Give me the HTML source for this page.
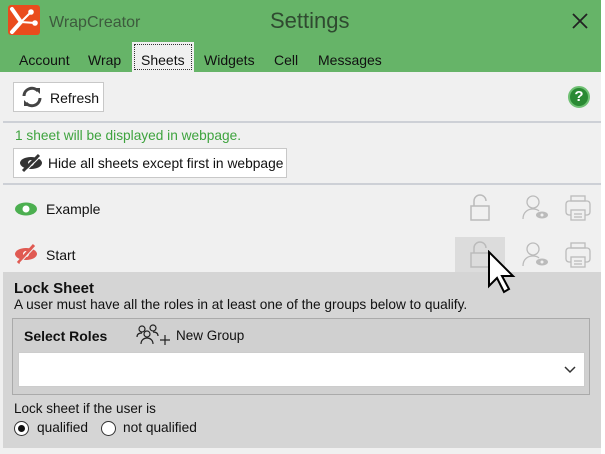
<!DOCTYPE html><html><head><style>
*{margin:0;padding:0;box-sizing:border-box}
body{width:605px;height:454px;background:#fff;font-family:"Liberation Sans",sans-serif;font-size:13px;color:#111;position:relative;overflow:hidden}
.a{position:absolute}
.main{left:0;top:0;width:601px;height:454px;background:#f0f0f0}
.hdr{left:0;top:0;width:601px;height:72px;background:#66b468}
.tab{top:50px;font-size:14px;color:#111}
.btn{background:#fff;border:1px solid #c8c8c8;font-size:14px}
.sep{left:3px;width:598px;height:2px;background:#cdd0d6}
</style></head><body>
<div class="a main"></div>
<div class="a hdr"></div>
<div class="a" style="left:8px;top:5px;width:32px;height:30px;background:#ea4c1d;border-radius:3px"></div>
<svg class="a" style="left:8px;top:5px" width="32" height="30" viewBox="0 0 32 30"><g stroke="#fff" fill="#fff" stroke-linecap="round"><path d="M4 4L13 17L4 27" stroke-width="4" fill="none"/><line x1="13" y1="17" x2="27" y2="18" stroke-width="2"/><line x1="13" y1="17" x2="22" y2="8" stroke-width="2"/><circle cx="27" cy="18" r="2.3"/><circle cx="23" cy="7" r="2.3"/></g></svg>
<div class="a" style="left:49px;top:14px;font-size:16px;color:#3d5a3d">WrapCreator</div>
<div class="a" style="left:270px;top:8px;font-size:22px;color:#2f4a30">Settings</div>
<svg class="a" style="left:571px;top:12px" width="18" height="18" viewBox="0 0 18 18"><path d="M2 2L16 16M16 2L2 16" stroke="#222" stroke-width="1.8"/></svg>
<div class="a tab" style="left:19px;top:52px">Account</div>
<div class="a tab" style="left:88px;top:52px">Wrap</div>
<div class="a" style="left:132px;top:42px;width:62px;height:30px;background:#f0f0f0"></div>
<div class="a" style="left:134px;top:44px;width:58px;height:26px;border:1px dotted #333"></div>
<div class="a tab" style="left:141px;top:52px">Sheets</div>
<div class="a tab" style="left:204px;top:52px">Widgets</div>
<div class="a tab" style="left:274px;top:52px">Cell</div>
<div class="a tab" style="left:318px;top:52px">Messages</div>
<div class="a btn" style="left:13px;top:82px;width:91px;height:30px"></div>
<svg class="a" style="left:20px;top:86px" width="24" height="22" viewBox="0 0 24 22"><g fill="none" stroke="#444" stroke-width="3"><path d="M4 10a8 8 0 0 1 14-5"/><path d="M20 12a8 8 0 0 1-14 5"/></g><path d="M14 2l6 0 0 6z" fill="#444"/><path d="M10 20l-6 0 0-6z" fill="#444"/></svg>
<div class="a" style="left:50px;top:90px;font-size:14px">Refresh</div>
<div class="a" style="left:568px;top:86px;width:22px;height:22px;border-radius:50%;background:#2a8a33;border:2px solid #6fc073;color:#fff;font-weight:bold;font-size:15px;text-align:center;line-height:18px">?</div>
<div class="a sep" style="top:121px"></div>
<div class="a" style="left:15px;top:128px;font-size:13.7px;color:#3ea33e">1 sheet will be displayed in webpage.</div>
<div class="a btn" style="left:13px;top:148px;width:274px;height:30px"></div>
<svg class="a" style="left:18px;top:153px" width="26" height="20" viewBox="0 0 26 20"><ellipse cx="13" cy="10" rx="11" ry="6" fill="#333"/><circle cx="13" cy="10" r="3" fill="#fff"/><line x1="5" y1="18" x2="21" y2="2" stroke="#333" stroke-width="3"/><line x1="5" y1="18" x2="21" y2="2" stroke="#fff" stroke-width="1" transform="translate(2,1)"/></svg>
<div class="a" style="left:48px;top:156px;font-size:13.8px">Hide all sheets except first in webpage</div>
<div class="a sep" style="top:183px"></div>
<svg class="a" style="left:13px;top:201px" width="26" height="16" viewBox="0 0 26 16"><ellipse cx="13" cy="8" rx="11" ry="6.5" fill="#4caf50"/><circle cx="13" cy="8" r="3.5" fill="#fff"/></svg>
<div class="a" style="left:46px;top:201px;font-size:14px">Example</div>
<svg class="a" style="left:13px;top:243px" width="26" height="22" viewBox="0 0 26 22"><ellipse cx="13" cy="11" rx="11" ry="6" fill="#e05a52"/><circle cx="13" cy="11" r="3" fill="#fff"/><line x1="5" y1="20" x2="21" y2="2" stroke="#e05a52" stroke-width="3"/><line x1="7" y1="20" x2="23" y2="3" stroke="#f0f0f0" stroke-width="1"/></svg>
<div class="a" style="left:46px;top:247px;font-size:14px">Start</div>
<div class="a" style="left:455px;top:237px;width:50px;height:35px;background:#dcdcdc"></div>
<svg class="a" style="left:468px;top:193px" width="26" height="30" viewBox="0 0 26 30"><g fill="none" stroke="#bbb" stroke-width="1.5"><rect x="3" y="13" width="18" height="14"/><path d="M6 13V8a6 6 0 0 1 12 0"/></g></svg>
<svg class="a" style="left:468px;top:240px" width="26" height="30" viewBox="0 0 26 30"><g fill="none" stroke="#bbb" stroke-width="1.5"><rect x="3" y="13" width="18" height="14"/><path d="M6 13V8a6 6 0 0 1 12 0"/></g></svg>
<svg class="a" style="left:520px;top:193px" width="30" height="30" viewBox="0 0 30 30"><g fill="none" stroke="#bbb" stroke-width="1.3"><circle cx="13" cy="9" r="6"/><path d="M3 26c0-7 5-10 10-10 3 0 5 1 6 2"/></g><ellipse cx="22" cy="22" rx="6" ry="3.5" fill="#bbb"/><circle cx="22" cy="22" r="1.5" fill="#f0f0f0"/></svg>
<svg class="a" style="left:520px;top:240px" width="30" height="30" viewBox="0 0 30 30"><g fill="none" stroke="#bbb" stroke-width="1.3"><circle cx="13" cy="9" r="6"/><path d="M3 26c0-7 5-10 10-10 3 0 5 1 6 2"/></g><ellipse cx="22" cy="22" rx="6" ry="3.5" fill="#bbb"/><circle cx="22" cy="22" r="1.5" fill="#f0f0f0"/></svg>
<svg class="a" style="left:563px;top:193px" width="30" height="30" viewBox="0 0 30 30"><g fill="none" stroke="#bbb" stroke-width="1.3"><rect x="3" y="8" width="24" height="14" rx="3"/><rect x="8" y="3" width="14" height="5"/><rect x="8" y="17" width="14" height="10" fill="#f0f0f0"/><line x1="11" y1="21" x2="19" y2="21"/><line x1="11" y1="24" x2="19" y2="24"/></g></svg>
<svg class="a" style="left:563px;top:240px" width="30" height="30" viewBox="0 0 30 30"><g fill="none" stroke="#bbb" stroke-width="1.3"><rect x="3" y="8" width="24" height="14" rx="3"/><rect x="8" y="3" width="14" height="5"/><rect x="8" y="17" width="14" height="10" fill="#f0f0f0"/><line x1="11" y1="21" x2="19" y2="21"/><line x1="11" y1="24" x2="19" y2="24"/></g></svg>
<div class="a" style="left:3px;top:272px;width:598px;height:176px;background:#d5d5d5"></div>
<div class="a" style="left:14px;top:280px;font-size:15px;font-weight:bold">Lock Sheet</div>
<div class="a" style="left:14px;top:297px;font-size:13.7px">A user must have all the roles in at least one of the groups below to qualify.</div>
<div class="a" style="left:12px;top:318px;width:578px;height:77px;border:1px solid #aaa;background:#d0d0d0"></div>
<div class="a" style="left:24px;top:328px;font-size:14px;font-weight:bold">Select Roles</div>
<svg class="a" style="left:136px;top:324px" width="38" height="24" viewBox="0 0 38 24"><g fill="none" stroke="#222" stroke-width="1.2"><circle cx="6" cy="5" r="3"/><circle cx="17" cy="4" r="3"/><circle cx="11" cy="10" r="3"/><path d="M1 13c0-3 2-4 5-4M22 12c0-3-2-4-5-4M5 20c0-4 3-6 6-6s6 2 6 6"/><path d="M24 16h10M29 11v10"/></g></svg>
<div class="a" style="left:176px;top:328px;font-size:13.5px">New Group</div>
<div class="a" style="left:18px;top:352px;width:567px;height:35px;background:#fff;border:1px solid #ccc"></div>
<svg class="a" style="left:563px;top:365px" width="14" height="10" viewBox="0 0 14 10"><path d="M2 2l5 5 5-5" fill="none" stroke="#333" stroke-width="1.5"/></svg>
<div class="a" style="left:14px;top:401px;font-size:13.5px">Lock sheet if the user is</div>
<div class="a" style="left:14px;top:421px;width:15px;height:15px;border-radius:50%;background:#fff;border:1px solid #333"></div>
<div class="a" style="left:18px;top:425px;width:7px;height:7px;border-radius:50%;background:#111"></div>
<div class="a" style="left:37px;top:420px;font-size:13.7px">qualified</div>
<div class="a" style="left:101px;top:421px;width:15px;height:15px;border-radius:50%;background:#fff;border:1px solid #333"></div>
<div class="a" style="left:123px;top:420px;font-size:13.7px">not qualified</div>
<svg class="a" style="left:486px;top:250px" width="34" height="46" viewBox="0 0 34 46"><path d="M3 2v34l8-8 7 14 5-3-7-13h11z" fill="#fff" stroke="#000" stroke-width="2"/></svg>
</body></html>
